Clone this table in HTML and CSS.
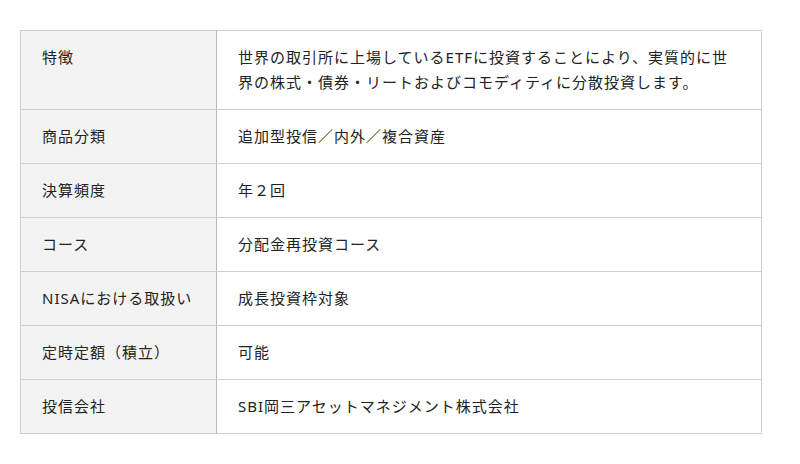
FILE: index.html
```html
<!DOCTYPE html>
<html lang="ja">
<head>
<meta charset="utf-8">
<title>ファンド概要</title>
<link rel="stylesheet" href="styles.css">
</head>
<body>
<div class="page">
  <table class="spec">
    <colgroup><col class="col-label"><col class="col-value"></colgroup>
    <tbody>
      <tr><th>特徴</th><td>世界の取引所に上場しているETFに投資することにより、実質的に世界の株式・債券・リートおよびコモディティに分散投資します。</td></tr>
      <tr><th>商品分類</th><td>追加型投信／内外／複合資産</td></tr>
      <tr><th>決算頻度</th><td>年２回</td></tr>
      <tr><th>コース</th><td>分配金再投資コース</td></tr>
      <tr><th>NISAにおける取扱い</th><td>成長投資枠対象</td></tr>
      <tr><th>定時定額（積立）</th><td>可能</td></tr>
      <tr><th>投信会社</th><td>SBI岡三アセットマネジメント株式会社</td></tr>
    </tbody>
  </table>
</div>
</body>
</html>
```
FILE: styles.css
```css
html, body {
  margin: 0;
  padding: 0;
  background: #ffffff;
}
.page {
  padding: 30px 0 0 20px;
}
.spec {
  width: 742px;
  table-layout: fixed;
  border-collapse: collapse;
  font-family: "Noto Sans", "Noto Sans CJK JP", sans-serif;
  font-size: 15px;
  line-height: 25px;
  letter-spacing: 1px;
  color: #222222;
}
.col-label { width: 196px; }
.spec th,
.spec td {
  border: 1px solid #cfcfcf;
  padding: 14px 20px 14px 21px;
  text-align: left;
  vertical-align: top;
  font-weight: normal;
}
.spec th {
  background: #f3f3f3;
  border-right-color: #b8b8b8;
}
.spec td {
  background: #ffffff;
}
```
